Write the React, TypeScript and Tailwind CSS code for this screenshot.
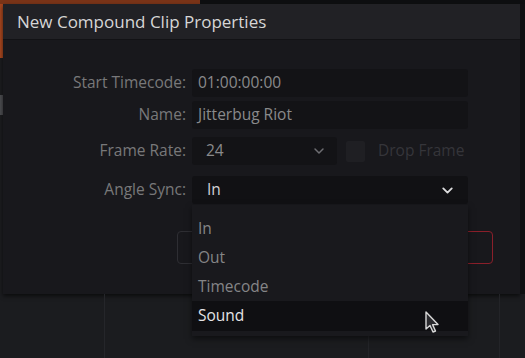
import React from "react";
import { ChevronDown } from "lucide-react";

const font = { fontFamily: '"Open Sans", "Liberation Sans", sans-serif' };

const Field: React.FC<{ label: string; children: React.ReactNode; className?: string }> = ({
  label,
  children,
  className,
}) => (
  <div className={"flex items-center " + (className ?? "")}>
    <div className="w-[189px] pr-[6px] text-right text-[15.5px] text-[#78787a]">{label}</div>
    {children}
  </div>
);

const Cursor: React.FC = () => (
  <svg width="18" height="24" viewBox="0 0 18 24">
    <path
      d="M2 1 L2 18 L6 14.5 L9 21 L11.5 20 L8.6 13.6 L14 13.6 Z"
      fill="#2a2a2e"
      stroke="#d8d8d8"
      strokeWidth="1.4"
      strokeLinejoin="round"
    />
  </svg>
);

const App: React.FC = () => {
  const options = ["In", "Out", "Timecode", "Sound"];

  return (
    <div className="relative w-[525px] h-[358px] overflow-hidden bg-[#1b1c1f]" style={font}>
      {/* strip above dialog */}
      <div className="flex h-[4px] bg-[#0e0f11]">
        <div className="w-[200px] bg-[#7a3418]" />
      </div>

      <div className="flex">
        {/* left edge */}
        <div className="w-[3px] flex flex-col">
          <div className="h-[54px] bg-[#a4451e]" />
          <div className="h-[37px] bg-[#1b1c1f]" />
          <div className="h-[20px] bg-[#4a4b4f]" />
        </div>

        {/* dialog */}
        <div className="w-[517px] h-[290px] bg-[#18181c] shadow-[0_2px_4px_rgba(0,0,0,0.6)]">
          <div className="h-[36px] flex items-center pl-[14px] bg-[#212125] border-b border-[#121215]">
            <span className="text-[17px] text-[#d6d6d6]">New Compound Clip Properties</span>
          </div>

          <div className="pt-[29px]">
            <Field label="Start Timecode:">
              <div className="w-[276px] h-[28px] rounded-[3px] bg-[#131316] flex items-center px-[6px] text-[15.5px] text-[#8a8a8c]">
                01:00:00:00
              </div>
            </Field>
            <Field label="Name:" className="mt-[4px]">
              <div className="w-[276px] h-[28px] rounded-[3px] bg-[#131316] flex items-center px-[6px] text-[15.5px] text-[#8a8a8c]">
                Jitterbug Riot
              </div>
            </Field>
            <Field label="Frame Rate:" className="mt-[8px]">
              <div className="w-[145px] h-[28px] rounded-[3px] bg-[#131316] flex items-center justify-between pl-[14px] pr-[10px] text-[15.5px] text-[#8a8a8c]">
                <span>24</span>
                <ChevronDown size={16} strokeWidth={2.2} className="text-[#6e6e72]" />
              </div>
              <div className="ml-[9px] w-[19px] h-[21px] rounded-[2px] bg-[#1f1f23]" />
              <span className="ml-[13px] text-[15.5px] text-[#35353a]">Drop Frame</span>
            </Field>
            <Field label="Angle Sync:" className="mt-[11px]">
              <div className="w-[276px] h-[28px] rounded-[3px] bg-[#111114] flex items-center justify-between pl-[15px] pr-[12px] text-[15.5px] text-[#d2d2d4]">
                <span>In</span>
                <ChevronDown size={17} strokeWidth={2.6} className="text-[#dcdcde]" />
              </div>
            </Field>

            {/* buttons (mostly hidden behind the menu) */}
            <div className="mt-[27px] flex pl-[174px] gap-[20px]">
              <div className="w-[145px] h-[33px] rounded-[4px] border border-[#2e2e33]" />
              <div className="w-[151px] h-[33px] rounded-[4px] border-[1.5px] border-[#8a1f2a]" />
            </div>
          </div>
        </div>

        {/* right edge */}
        <div className="w-[5px] h-[290px] bg-[#0f1012]" />
      </div>

      {/* area below dialog */}
      <div className="flex h-[64px]">
        <div className="w-[105px] border-r border-[#25262a]" />
        <div className="w-[264px] border-r border-[#232428]" />
        <div className="w-[131px] border-r border-[#232428]" />
      </div>

      {/* dropdown menu */}
      <div className="absolute left-[192px] top-[205px] w-[276px] h-[131px] bg-[#19191d] shadow-[0_3px_6px_rgba(0,0,0,0.5)] pt-[9px]">
        {options.map((o) => (
          <div
            key={o}
            className={
              o === "Sound"
                ? "h-[30px] flex items-center px-[6px] text-[15.5px] text-[#e4e4e6] bg-[#0f0f12]"
                : "h-[29px] flex items-center px-[6px] text-[15.5px] text-[#858587]"
            }
          >
            {o}
          </div>
        ))}
      </div>

      <div className="absolute left-[424px] top-[311px]">
        <Cursor />
      </div>
    </div>
  );
};

export default App;
